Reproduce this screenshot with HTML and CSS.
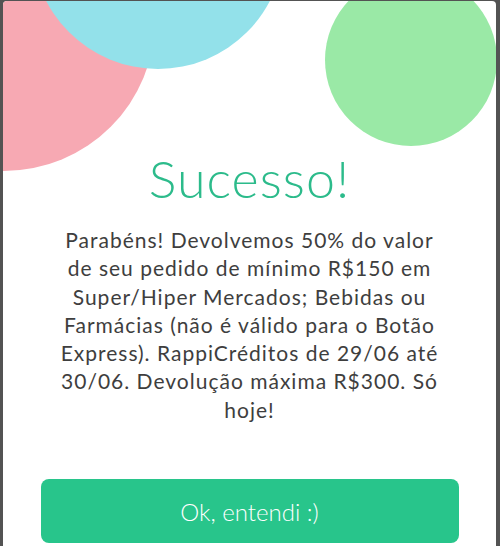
FILE: index.html
```html
<!DOCTYPE html>
<html lang="pt-BR">
<head>
    <meta charset="UTF-8">
    <meta name="viewport" content="width=device-width, initial-scale=1.0">
    <title>Sucesso</title>
    <link rel="stylesheet" href="styles.css">
</head>
<body>
    <div class="modal">
        <span class="bubble bubble-pink"></span>
        <span class="bubble bubble-blue"></span>
        <span class="bubble bubble-green"></span>
        <div class="content">
            <h1>Sucesso!</h1>
            <p class="message">Parabéns! Devolvemos 50% do valor de seu pedido de mínimo R$150 em Super/Hiper Mercados; Bebidas ou Farmácias (não é válido para o Botão Express). RappiCréditos de 29/06 até 30/06. Devolução máxima R$300. Só hoje!</p>
            <button type="button" class="btn">Ok, entendi :)</button>
        </div>
    </div>
</body>
</html>
```

FILE: styles.css
```css
body, html {
    margin: 0;
    padding: 0;
    height: 100%;
    background-color: #535353;
    font-family: Lato, "Noto Sans", sans-serif;
    overflow: hidden;
}
.modal {
    position: relative;
    margin: 1px 4px 0 3px;
    height: 600px;
    background: white;
    border-radius: 4px 4px 0 0;
    overflow: hidden;
}
.bubble {
    position: absolute;
    border-radius: 50%;
}
.bubble-pink {
    left: -150px;
    top: -132px;
    width: 302px;
    height: 302px;
    background-color: #f7a9b3;
}
.bubble-blue {
    left: 29px;
    top: -184px;
    width: 252px;
    height: 252px;
    background-color: #93e1ea;
}
.bubble-green {
    left: 322px;
    top: -27px;
    width: 172px;
    height: 172px;
    background-color: #9ae9a6;
}
.content {
    position: relative;
    display: flex;
    flex-direction: column;
    align-items: center;
    padding: 146px 30px 0;
}
h1 {
    margin: 0;
    font-size: 52px;
    font-weight: 300;
    line-height: 62px;
    letter-spacing: 1px;
    color: #2cbb8b;
}
.message {
    margin: 17px 0 0;
    max-width: 399px;
    font-size: 21px;
    line-height: 28.3px;
    letter-spacing: 1px;
    color: #3e3e3e;
    text-align: center;
}
.btn {
    margin-top: 55px;
    width: 418px;
    height: 64px;
    border: none;
    border-radius: 8px;
    background-color: #28c58b;
    color: white;
    font-family: Lato, "Noto Sans", sans-serif;
    font-size: 24px;
    font-weight: 300;
    cursor: pointer;
}
```
